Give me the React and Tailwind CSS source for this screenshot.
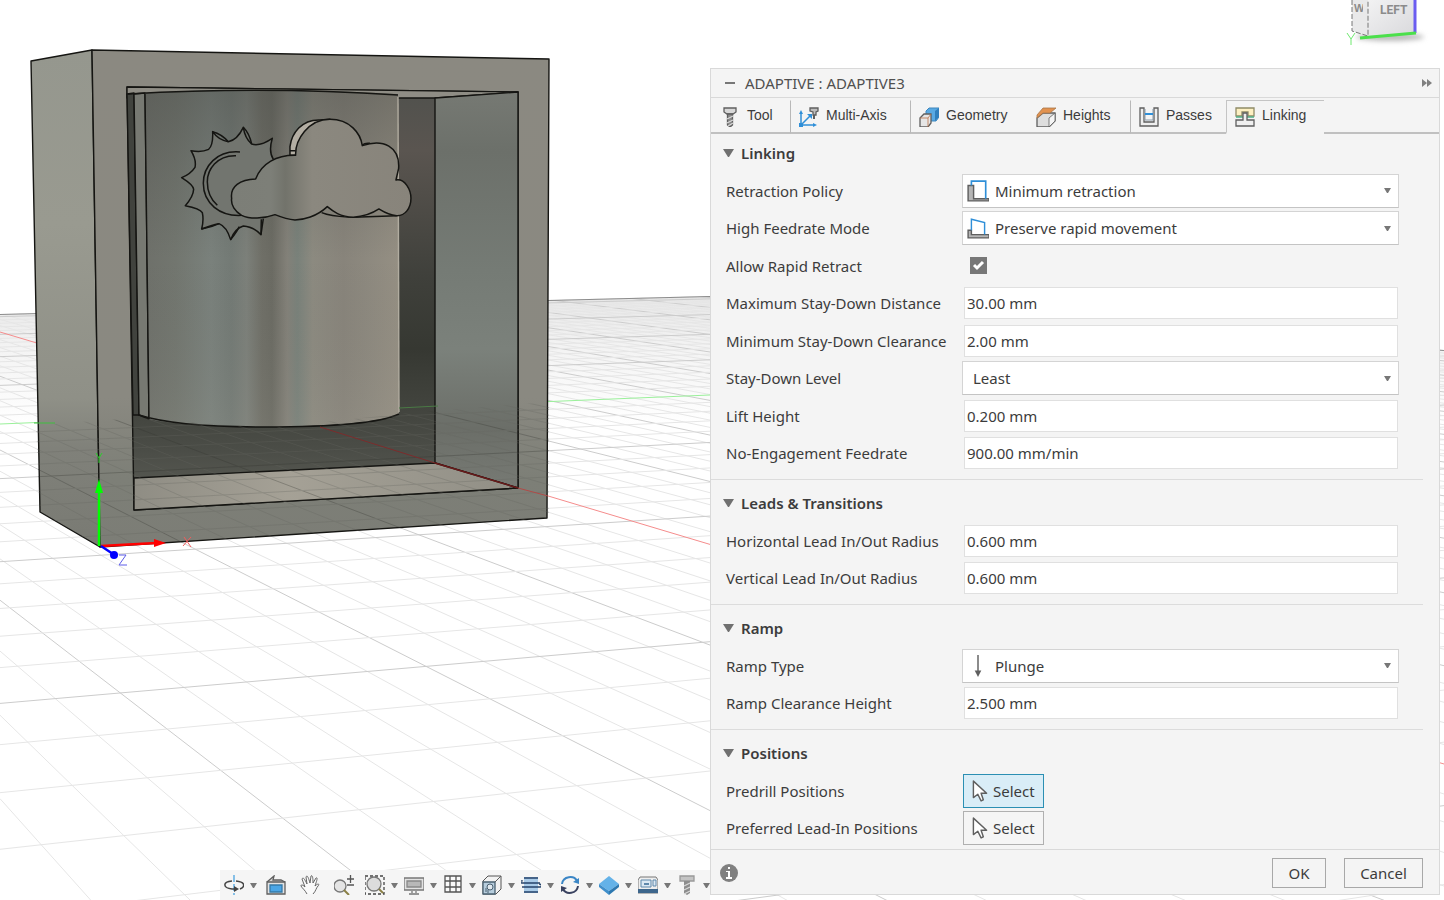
import { useId, useState } from 'react';

const HORIZON = 160;
const BASE = 547;

// grid lines, described by where they cross the base line
const gridLines = () => {
  const lines = [];
  for (let i = -16; i <= 190; i++) {
    const x = 711 + (i - 40) * 52;
    const slope = (BASE - HORIZON) / (x + 571);
    if (x > -540 && i !== 40) {
      lines.push({ key: 'b' + i, x1: 0, y1: HORIZON + slope * 571, x2: 1444, y2: HORIZON + slope * 2015, major: i % 5 === 0 });
    }
  }
  for (let i = -20; i <= 23; i++) {
    const x = -2911 + i * 314;
    const slope = (BASE - HORIZON) / (6250 - x);
    if (i !== 0) {
      lines.push({ key: 'a' + i, x1: 0, y1: HORIZON + slope * 6250, x2: 1444, y2: HORIZON + slope * 4806, major: i % 5 === 0 });
    }
  }
  return lines;
};

const GRID = gridLines();

const GridLines = ({ minor, major }) => (
  <g fill="none">
    {GRID.map((l) => (
      <line key={l.key} x1={l.x1} y1={l.y1} x2={l.x2} y2={l.y2} stroke={l.major ? major : minor} strokeWidth="1" />
    ))}
  </g>
);

const Scene = () => (
  <svg className="absolute inset-0 h-full w-full" viewBox="0 0 1444 900" preserveAspectRatio="xMinYMin slice" aria-hidden="true">
    <defs>
      <linearGradient id="haze" x1="0" y1="0" x2="0" y2="1">
        <stop offset="0" stopColor="#e6e6e6" />
        <stop offset="0.1" stopColor="#f4f4f4" />
        <stop offset="0.22" stopColor="#ffffff" />
      </linearGradient>
      <linearGradient id="side" x1="0" y1="0" x2="0" y2="1">
        <stop offset="0" stopColor="#95978e" />
        <stop offset="0.35" stopColor="#999a90" />
        <stop offset="0.7" stopColor="#8f9087" />
        <stop offset="0.8" stopColor="#80817a" />
        <stop offset="1" stopColor="#797a73" />
      </linearGradient>
      <linearGradient id="front" x1="0" y1="0" x2="0" y2="1">
        <stop offset="0" stopColor="#8b8981" />
        <stop offset="0.7" stopColor="#8a8981" />
        <stop offset="0.86" stopColor="#7d7f77" />
        <stop offset="1" stopColor="#7c7d76" />
      </linearGradient>
      <linearGradient id="cyl" x1="0" y1="0" x2="1" y2="0">
        <stop offset="0" stopColor="#6e706a" />
        <stop offset="0.12" stopColor="#72766f" />
        <stop offset="0.26" stopColor="#7a817c" />
        <stop offset="0.34" stopColor="#737a75" />
        <stop offset="0.4" stopColor="#7c807a" />
        <stop offset="0.46" stopColor="#6f6f67" />
        <stop offset="0.5" stopColor="#6b6b63" />
        <stop offset="0.56" stopColor="#838179" />
        <stop offset="0.6" stopColor="#79817a" />
        <stop offset="0.66" stopColor="#8c8a80" />
        <stop offset="0.78" stopColor="#88847b" />
        <stop offset="0.88" stopColor="#8d897f" />
        <stop offset="1" stopColor="#958f83" />
      </linearGradient>
      <linearGradient id="shade" x1="0" y1="0" x2="0" y2="1">
        <stop offset="0" stopColor="#4a4c48" stopOpacity="0.45" />
        <stop offset="0.25" stopColor="#4a4c48" stopOpacity="0.2" />
        <stop offset="0.5" stopColor="#4a4c48" stopOpacity="0" />
        <stop offset="1" stopColor="#aaa89c" stopOpacity="0.12" />
      </linearGradient>
      <linearGradient id="back" x1="0" y1="0" x2="0" y2="1">
        <stop offset="0" stopColor="#50514d" />
        <stop offset="0.15" stopColor="#5a5550" />
        <stop offset="0.45" stopColor="#3f403b" />
        <stop offset="0.62" stopColor="#363832" />
        <stop offset="0.86" stopColor="#4b4d47" />
        <stop offset="1" stopColor="#5e5f58" />
      </linearGradient>
      <linearGradient id="wall" x1="0" y1="0" x2="0" y2="1">
        <stop offset="0" stopColor="#767973" />
        <stop offset="0.15" stopColor="#6c706a" />
        <stop offset="0.45" stopColor="#757b75" />
        <stop offset="0.65" stopColor="#7b817b" />
        <stop offset="0.85" stopColor="#6b6e68" />
        <stop offset="1" stopColor="#777a74" />
      </linearGradient>
      <linearGradient id="floor" x1="0" y1="0" x2="1" y2="0">
        <stop offset="0" stopColor="#8f8d84" />
        <stop offset="0.4" stopColor="#a5a196" />
        <stop offset="1" stopColor="#918f86" />
      </linearGradient>
      <linearGradient id="cloud" x1="0" y1="0" x2="1" y2="0">
        <stop offset="0" stopColor="#7c7e77" />
        <stop offset="0.22" stopColor="#7d7f78" />
        <stop offset="0.3" stopColor="#72736b" />
        <stop offset="0.45" stopColor="#8b887f" />
        <stop offset="1" stopColor="#88847b" />
      </linearGradient>
      <clipPath id="ground">
        <path d="M0 314 L710 296 L1444 350 V900 H0Z" />
      </clipPath>
      <clipPath id="submerged">
        <path d="M36 425 L139 418 L270 428 L399 414 L549 402 V519 L100 547 L40 512Z" />
      </clipPath>
    </defs>

    <rect width="1444" height="900" fill="#fff" />
    <g clipPath="url(#ground)">
      <rect y="290" width="1444" height="610" fill="url(#haze)" />
      <GridLines minor="#e6e6e6" major="#cccccc" />
      <path d="M0 424 L710 395" stroke="#9af09a" fill="none" />
      <path d="M0 332 L1444 764" stroke="#f58c8c" fill="none" />
      <path d="M0 314 L710 296 L1444 350" stroke="#8c8c8c" fill="none" strokeWidth="2" />
    </g>

    {/* box */}
    <g stroke="#151512" strokeWidth="1.4" strokeLinejoin="round">
      <path d="M31 61 L92 50 L100 547 L40 512Z" fill="url(#side)" />
      <path d="M92 50 L549 59 L547 518 L100 547Z" fill="url(#front)" />
      <path d="M127 87 L518 92 L518 488 L134 510Z" fill="url(#back)" />
      <path d="M127 87 L518 92 L435 98 H127Z" fill="#8f8d85" />
      <path d="M435 98 L518 92 L518 488 L435 463Z" fill="url(#wall)" />
      <path d="M134 478 L435 463 L518 488 L134 510Z" fill="url(#floor)" />
      <path d="M127 94 L134 93 L139 415 L133 415Z" fill="#41433e" />
      <path d="M134 94 L145 93 L149 419 L139 415Z" fill="#777972" />
      <path d="M145 93 Q265 86 398 94 L399 414 C380 422 330 427 265 427 C220 427 170 424 149 419Z" fill="url(#cyl)" stroke="none" />
      <path d="M145 93 Q265 86 398 94 L399 414 C380 422 330 427 265 427 C220 427 170 424 149 419Z" fill="url(#shade)" stroke="none" />
      <path d="M128 94 Q265 86 398 95 M139 415 C170 425 220 427 265 427 C330 427 380 423 399 414 M145 93 L149 419" fill="none" />
      <path d="M398 97 L399 412" stroke="#b1aca0" fill="none" />
    </g>

    {/* sun and cloud relief */}
    <g transform="translate(0 30) scale(0.3333)" stroke="#151512" strokeWidth="4.5" strokeLinejoin="round" fill="none">
      <path fill="#72756f" d="M820 388 Q805 365 817 325 Q780 350 755 342 Q735 325 730 292 Q712 330 685 335 Q655 330 638 305 Q640 345 626 358 Q605 368 573 362 Q590 390 585 412 Q572 432 545 443 Q580 465 581 478 Q580 500 556 527 Q600 535 607 548 Q612 570 605 597 Q635 585 657 581 Q680 590 692 629 Q705 595 730 588 Q760 590 783 614 L790 566" />
      <path d="M638 305 Q665 312 685 335 M730 292 Q748 310 755 342 M605 597 Q635 592 657 581 M692 629 Q715 600 717 590 M783 614 L784 568 M720 366 C650 360 610 410 610 460 C610 520 660 560 725 556 M708 377 C650 375 622 420 622 455 C622 490 640 515 652 526" />
      <path fill="#b3aea3" d="M870 376 V350 C875 310 905 268 960 270 L990 268 L887 376Z" />
      <path d="M870 362 H887 M965 548 C1000 562 1040 560 1060 562 L1190 557 M1087 345 Q1095 338 1110 340" />
      <path fill="url(#cloud)" d="M695 505 C690 470 720 448 767 447 C785 400 830 375 887 376 C885 330 925 268 990 268 C1050 268 1082 310 1087 347 C1150 325 1200 350 1196 415 L1188 450 C1215 445 1233 480 1233 505 C1233 535 1215 558 1190 557 C1165 555 1150 545 1137 537 C1110 555 1090 560 1060 562 C1020 560 1000 545 982 530 C950 560 910 570 885 570 C860 568 840 560 825 554 C790 567 750 568 725 556 C705 545 692 525 695 505Z" />
    </g>

    <g clipPath="url(#submerged)" opacity="0.3">
      <GridLines minor="#666761" major="#33342f" />
    </g>
    <path d="M320 427 L435 463" stroke="#7c2c2c" fill="none" />
    <path d="M435 463 L518 488" stroke="#6b1a1a" fill="none" strokeWidth="1.5" />
    <path d="M518 488 L548 496" stroke="#b04b48" fill="none" />
    <path d="M34 423 L55 423" stroke="#3fbf3f" fill="none" />
    <path d="M399 408 L438 406" stroke="#4a7a45" fill="none" />

    {/* origin axes */}
    <path d="M99 546 V490" stroke="#0f0" strokeWidth="2.5" />
    <path d="M99 479 L103 493 H95Z" fill="#0f0" />
    <path d="M96 453 L99 458 L102 453 M99 458 V463" stroke="#2bd12b" fill="none" />
    <path d="M101 546 L156 543" stroke="red" strokeWidth="2.5" />
    <path d="M166 543 L154 539 V547Z" fill="red" />
    <path d="M101 546 L113 554" stroke="#00f" strokeWidth="2.5" />
    <circle cx="114" cy="555" r="4" fill="#00f" />
    <path d="M119 555 H126 L119 565 H127" stroke="#5c5ce8" fill="none" />
    <path d="M184 537 L191 547 M191 537 L183 546" stroke="#f25c5c" fill="none" />
  </svg>
);

const ViewCube = () => (
  <svg className="absolute top-0 right-0" width="104" height="56" viewBox="1340 0 104 56" aria-hidden="true">
    <defs>
      <filter id="soft" x="-20%" y="-100%" width="140%" height="300%">
        <feGaussianBlur stdDeviation="2.5" />
      </filter>
      <linearGradient id="cube" x1="0" y1="0" x2="1" y2="1">
        <stop offset="0" stopColor="#f2f2f3" />
        <stop offset="1" stopColor="#d9d9dc" />
      </linearGradient>
    </defs>
    <ellipse cx="1390" cy="37" rx="34" ry="4" fill="#bbb" filter="url(#soft)" />
    <path d="M1352 0 H1368 V36 L1352 31Z" fill="#e9e9ea" />
    <path d="M1368 0 H1415 V33 L1368 36Z" fill="url(#cube)" />
    <path d="M1352 0 V31 L1368 36 V0" fill="none" stroke="#777" strokeDasharray="5 2" />
    <path d="M1415 0 V33" stroke="#6a5cf0" strokeWidth="3" />
    <path d="M1360 38 L1416 33" stroke="#4be04b" strokeWidth="3" />
    <path d="M1347 33 L1351 39 L1355 33 M1351 39 V45" fill="none" stroke="#6fe86f" />
    <text x="1354" y="12" fontSize="11" fontWeight="700" fill="#8b8b8b" fontFamily="Liberation Sans, sans-serif">W</text>
    <path d="M1363 0 H1367 V14 H1363Z" fill="#e9e9ea" />
    <text x="1380" y="14" fontSize="12" fontWeight="700" fill="#8b8b8b" fontFamily="Roboto, sans-serif">LEFT</text>
  </svg>
);

const Icon = ({ size = 20, children }) => (
  <svg className="shrink-0" width={size} height={size} viewBox="0 0 20 20" fill="none" stroke="#5f5f5f" strokeWidth="1.3" aria-hidden="true">
    {children}
  </svg>
);

const ToolIcon = () => (
  <Icon>
    <path d="M4 1 H16 V5 L13 7 H7 L4 5Z" fill="#d8d8d8" />
    <path d="M7.500 7 V18 L10 20 L12.500 18 V7Z" fill="#8a8a8a" />
    <path d="M7 12 L13 9 M7 16 L13 13 M8 19 L13 16" stroke="#d8d8d8" />
  </Icon>
);

const MultiAxisIcon = () => (
  <Icon>
    <path d="M2 18 V5 M2 18 H15 M2 18 L12 8" stroke="#2f8fd8" strokeWidth="1.5" />
    <path d="M0 7 L2 3 L4 7Z M14 16 L18 18 L14 20Z M8 7 H13 V12Z M0 16 H4 V20 H0Z" fill="#2f8fd8" stroke="none" />
    <path d="M11 1 H19 V4 L17 5 V8 H14 V5 L11 4Z" fill="#bdbdbd" />
    <path d="M15 8 V12" strokeWidth="2" />
  </Icon>
);

const GeometryIcon = () => (
  <Icon>
    <path d="M7 4 L10 1 H20 V10 L17 14 H7Z" fill="#58a9e3" stroke="#3f87bd" strokeWidth="1" />
    <path d="M16 4 L20 1 V10 L16 14Z" fill="#2f7fbd" stroke="none" />
    <path d="M1 11 L5 7 H12 V16 L9 20 H1Z" fill="#e6e6e6" />
    <path d="M1 11 H9 V20 M9 11 L12 7" stroke="#b9714a" strokeWidth="0.8" />
  </Icon>
);

const HeightsIcon = () => (
  <Icon>
    <path d="M1 11 L7 6 H19 V14 L13 20 H1Z" fill="#dedede" />
    <path d="M13 20 V11 L19 6 V14Z" fill="#f5f5f5" strokeWidth="0.8" />
    <path d="M1 8 L7 1 H20 L14 6 H7 L1 11Z" fill="#e2924f" stroke="#a8764a" strokeWidth="0.8" />
  </Icon>
);

const PassesIcon = () => (
  <Icon>
    <path d="M1 1 H5 V15 H15 V1 H19 V19 H1Z" fill="#efefef" />
    <path d="M6 2 V13 H14 V2" stroke="#8a9aa8" strokeWidth="1" />
    <path d="M6 7 H14" stroke="#2f8fd8" strokeWidth="2" />
  </Icon>
);

const LinkingIcon = () => (
  <Icon>
    <path d="M1 1 H19 V9 H13 V5 H7 V9 H1Z" fill="#fdf0c2" stroke="#8f8a66" />
    <path d="M1 10 H8 M12 10 H19" stroke="#4fae86" />
    <path d="M1 19 V13 H8 V6 H12 V13 H19 V19Z" fill="#efefef" />
  </Icon>
);

const RetractIcon = () => (
  <Icon size={22}>
    <path d="M1 5 H6 V17 H20 V19 H1Z" fill="#b5b5b5" />
    <path d="M4 5 V1 H17 V17" stroke="#2f8fd8" strokeWidth="1.500" />
  </Icon>
);

const RapidIcon = () => (
  <Icon size={22}>
    <path d="M1 12 H4 V16 H20 V19 H1Z" fill="#b5b5b5" />
    <path d="M4 12 V2 L16 5 V16" stroke="#2f8fd8" />
  </Icon>
);

const PlungeIcon = () => (
  <Icon size={22}>
    <path d="M10 0 V16" />
    <path d="M7 14 L10 20 L13 14Z" fill="#5f5f5f" stroke="none" />
  </Icon>
);

const CursorIcon = () => (
  <Icon size={22}>
    <path d="M4 1 V16 L8 13 L11 19 L13 18 L11 12 H16Z" fill="#fff" strokeLinejoin="round" />
  </Icon>
);

const Caret = () => (
  <svg width="7" height="5" viewBox="0 0 7 5" className="pointer-events-none shrink-0" aria-hidden="true">
    <path d="M0 0 H7 L4 5 H3Z" fill="#777" />
  </svg>
);

const tabs = [
  { name: 'Tool', icon: ToolIcon, box: 'w-20 border-r border-r-[#b8b8b8]' },
  { name: 'Multi-Axis', icon: MultiAxisIcon, box: 'w-[120px] border-r border-r-[#b8b8b8]' },
  { name: 'Geometry', icon: GeometryIcon, box: 'w-[117px]' },
  { name: 'Heights', icon: HeightsIcon, box: 'w-[103px] border-r border-r-[#b8b8b8]' },
  { name: 'Passes', icon: PassesIcon, box: 'w-[95px]' },
  { name: 'Linking', icon: LinkingIcon, box: 'w-[98px]' },
];

const Row = ({ label, id, children }) => (
  <div className="grid min-w-0 grid-cols-[236px_minmax(0,1fr)] items-center">
    <label htmlFor={id} className="whitespace-nowrap">{label}</label>
    {children}
  </div>
);

const SelectRow = ({ label, value, icon }) => {
  const id = useId();
  return (
    <Row label={label} id={id}>
      <div className="relative flex items-center">
        <select
          id={id}
          defaultValue={value}
          className={`h-[34px] w-full appearance-none border border-[#d4d4d4] border-b-[#c4c4c4] bg-white pr-6 ${icon ? 'pl-8' : 'pl-[10px]'}`}
        >
          <option>{value}</option>
        </select>
        <span className="pointer-events-none absolute left-[5px]">{icon}</span>
        <span className="pointer-events-none absolute right-2"><Caret /></span>
      </div>
    </Row>
  );
};

const InputRow = ({ label, value }) => {
  const id = useId();
  return (
    <Row label={label} id={id}>
      <div className="flex pr-px pl-0.5">
        <input id={id} type="text" defaultValue={value} className="h-8 w-full border border-[#e0e0e0] bg-white px-0.5" />
      </div>
    </Row>
  );
};

const CheckRow = ({ label }) => {
  const id = useId();
  return (
    <Row label={label} id={id}>
      <div className="relative flex items-center pl-2">
        <input id={id} type="checkbox" defaultChecked className="peer size-[17px] appearance-none border border-[#777] bg-white checked:bg-[#777]" />
        <svg className="pointer-events-none absolute left-2 hidden peer-checked:block" width="17" height="17" viewBox="0 0 17 17" fill="none" stroke="#fff" strokeWidth="3" aria-hidden="true">
          <path d="M4 8 L7 11 L13 5" />
        </svg>
      </div>
    </Row>
  );
};

const PickRow = ({ label, active }) => {
  const id = useId();
  return (
    <Row label={label} id={id}>
      <button
        id={id}
        type="button"
        className={`ml-px flex h-[34px] w-[81px] items-center gap-0.5 border pl-[5px] ${active ? 'border-[#2b8fb3] bg-[#d9edf7]' : 'border-[#b0b0b0] bg-[#f5f5f5]'}`}
      >
        <CursorIcon />
        <span>Select</span>
      </button>
    </Row>
  );
};

const Section = ({ title, rows, last, children }) => {
  const [open, setOpen] = useState(true);
  return (
    <section className={`mr-4 pt-1 first:pt-0 ${last ? 'pb-0.5' : 'border-b border-[#dcdcdc] pb-[7px]'}`}>
      <h2>
        <button type="button" aria-expanded={open} onClick={() => setOpen(!open)} className="flex h-[38px] items-center gap-[7px] pl-3 font-semibold">
          <svg width="11" height="8" viewBox="0 0 11 8" aria-hidden="true">
            <path d="M0 0 H11 L6 8 H5Z" fill="#707070" />
          </svg>
          {title}
        </button>
      </h2>
      {open && <div className={`grid auto-rows-fr pr-6 pl-[15px] ${rows}`}>{children}</div>}
    </section>
  );
};

const AdaptivePanel = () => {
  const [tab, setTab] = useState('Linking');

  return (
    <section className="relative mt-[68px] mb-[5px] flex flex-col border border-[#d9d9d9] bg-[#f4f4f4] text-[15px] leading-5 text-[#3c3c3c]">
      <header className="flex h-[29px] items-center border-b border-[#d9d9d9] pr-[7px] pl-[14px]">
        <button type="button" aria-label="Collapse" className="flex h-5 w-5 items-center">
          <span className="h-0.5 w-[10px] bg-[#777]" />
        </button>
        <h1 className="text-[#505050]">ADAPTIVE : ADAPTIVE3</h1>
        <button type="button" aria-label="Dock" className="ml-auto">
          <svg width="10" height="8" viewBox="0 0 10 8" aria-hidden="true">
            <path d="M0 0 L5 4 L0 8Z M5 0 L10 4 L5 8Z" fill="#808080" />
          </svg>
        </button>
      </header>

      <div role="tablist" className="flex h-9 pt-0.5 font-['Liberation_Sans',sans-serif] text-[14px]">
        {tabs.map(({ name, icon: TabIcon, box }) => (
          <button
            key={name}
            type="button"
            role="tab"
            aria-selected={tab === name}
            onClick={() => setTab(name)}
            className={`flex shrink-0 items-center gap-[7px] border-t border-b-2 ${box} ${name === 'Tool' ? 'pl-[9px]' : 'pl-2'} ${
              tab === name ? 'border-l border-l-[#c4c4c4] border-t-[#c4c4c4] border-b-transparent' : 'border-t-transparent border-b-[#c0c0c0]'
            }`}
          >
            <TabIcon />
            <span className="pb-1">{name}</span>
          </button>
        ))}
        <div className="grow border-b-2 border-[#c0c0c0]" />
      </div>

      <form className="flex flex-col" onSubmit={(e) => e.preventDefault()}>
        <div>
          <Section title="Linking" rows="h-[300px]">
            <SelectRow label="Retraction Policy" value="Minimum retraction" icon={<RetractIcon />} />
            <SelectRow label="High Feedrate Mode" value="Preserve rapid movement" icon={<RapidIcon />} />
            <CheckRow label="Allow Rapid Retract" />
            <InputRow label="Maximum Stay-Down Distance" value="30.00 mm" />
            <InputRow label="Minimum Stay-Down Clearance" value="2.00 mm" />
            <SelectRow label="Stay-Down Level" value="Least" />
            <InputRow label="Lift Height" value="0.200 mm" />
            <InputRow label="No-Engagement Feedrate" value="900.00 mm/min" />
          </Section>
          <Section title="Leads &amp; Transitions" rows="h-[75px]">
            <InputRow label="Horizontal Lead In/Out Radius" value="0.600 mm" />
            <InputRow label="Vertical Lead In/Out Radius" value="0.600 mm" />
          </Section>
          <Section title="Ramp" rows="h-[75px]">
            <SelectRow label="Ramp Type" value="Plunge" icon={<PlungeIcon />} />
            <InputRow label="Ramp Clearance Height" value="2.500 mm" />
          </Section>
          <Section title="Positions" rows="h-[75px]" last>
            <PickRow label="Predrill Positions" active />
            <PickRow label="Preferred Lead-In Positions" />
          </Section>
        </div>

        <footer className="flex items-center gap-[18px] border-t border-[#d9d9d9] pt-2 pr-4 pb-[6px] pl-[9px]">
          <button type="button" aria-label="Info" className="mr-auto">
            <svg width="18" height="18" viewBox="0 0 18 18" aria-hidden="true">
              <circle cx="9" cy="9" r="9" fill="#808080" />
              <path d="M6 7 H10 V13 H12 V15 H6 V13 H8 V8 H6Z M8 3 H10 V5 H8Z" fill="#fff" />
            </svg>
          </button>
          <button type="submit" className="h-[30px] w-[54px] border border-[#a8a8a8]">OK</button>
          <button type="button" className="h-[30px] w-[79px] border border-[#a8a8a8]">Cancel</button>
        </footer>
      </form>
    </section>
  );
};

const navTools = [
  {
    name: 'Orbit',
    menu: true,
    art: (
      <>
        <path d="M10 0 V20" stroke="#4aa3df" strokeDasharray="7 2" />
        <path d="M8 6 C-2 7 -1 13 8 14 H13 M12 6 C22 7 21 12 16 14" stroke="#444" strokeWidth="1.5" />
        <path d="M10 11 L15 14 L10 17Z" fill="#444" stroke="none" />
      </>
    ),
  },
  {
    name: 'Look At',
    art: (
      <>
        <path d="M1 7 L8 1 L7 5 H15 L19 7" fill="#d5d5d5" />
        <path d="M1 7 H19 V19 H1Z" fill="#e2e2e2" />
        <path d="M4 10 H16 V17 H4Z" fill="#4ba6e6" stroke="#3579a8" />
      </>
    ),
  },
  {
    name: 'Pan',
    art: (
      <path
        d="M7 19 C5 15 2 13 1 11 C1 9 3 10 5 12 L2 4 C3 2 4 3 7 9 L6 2 C7 0 8 1 10 8 L11 1 C12 0 13 1 13 8 L16 3 C18 2 17 5 15 11 C18 8 20 9 18 11 C16 13 16 16 13 19"
        fill="#fafafa"
        stroke="#666"
        strokeWidth="1"
      />
    ),
  },
  {
    name: 'Zoom',
    art: (
      <>
        <circle cx="6" cy="11" r="6" fill="#e4e4e4" stroke="#777" />
        <path d="M10 15 L15 20" stroke="#8b8046" strokeWidth="2" />
        <path d="M13 4 H20 M16.500 0 V8 M13 10 H20" stroke="#555" />
      </>
    ),
  },
  {
    name: 'Zoom Window',
    menu: true,
    art: (
      <>
        <path d="M0 1 H19 V19 H0Z" stroke="#444" strokeDasharray="3 2" />
        <circle cx="9" cy="9" r="7" fill="#dcdcdc" stroke="#777" />
        <path d="M14 14 L18 18" stroke="#8b8046" strokeWidth="2" />
      </>
    ),
  },
  {
    name: 'Display Settings',
    menu: true,
    art: (
      <>
        <path d="M0 3 H20 V15 H0Z" fill="#e2e2e2" stroke="#777" />
        <path d="M3 6 H17 V12 H3Z" fill="#b8b8b8" stroke="#888" />
        <path d="M8 16 V18 M12 16 V18 M5 19 H15" stroke="#777" />
      </>
    ),
  },
  {
    name: 'Grid and Snaps',
    menu: true,
    art: <path d="M2 1 H18 V17 H2Z M7 1 V17 M13 1 V17 M2 6 H18 M2 12 H18" fill="#fafafa" stroke="#555" />,
  },
  {
    name: 'Viewports',
    menu: true,
    art: (
      <>
        <path d="M1 6 L6 1 H19 V14 L14 19 H1Z" fill="#f2f2f2" stroke="#555" strokeWidth="1" />
        <path d="M1 7 H13 V19 H1Z" fill="#b7cddd" stroke="#4a6070" />
        <path d="M13 7 L19 1" strokeWidth="1" />
        <circle cx="8" cy="12" r="3" fill="#e1e9ef" stroke="#4a6070" strokeWidth="1" />
        <path d="M4 13 V17 M6 15 V18" stroke="#4a6070" strokeWidth="1" />
      </>
    ),
  },
  {
    name: 'Object Visibility',
    menu: true,
    art: (
      <>
        <path d="M3 2 H17 V18 H3Z" fill="#a9cbe8" stroke="none" />
        <path d="M3 3 H17 M1 8 H19 M1 12 H19 M3 17 H17" stroke="#24436a" strokeWidth="1.400" />
        <path d="M1 8 C-1 8 -1 5 2 6 M19 12 C21 12 21 9 18 9" stroke="#24436a" />
      </>
    ),
  },
  {
    name: 'Regenerate',
    menu: true,
    art: (
      <>
        <path d="M2 9 C3 1 14 0 17 6" stroke="#3b86c6" strokeWidth="2" />
        <path d="M18 11 C17 19 6 20 3 14" stroke="#3a4260" strokeWidth="2" />
        <path d="M19 3 V9 L13 7Z" fill="#3b86c6" stroke="none" />
        <path d="M1 17 V11 L7 13Z" fill="#3a4260" stroke="none" />
      </>
    ),
  },
  {
    name: 'Stock',
    menu: true,
    art: (
      <>
        <path d="M10 1 L20 9 L10 16 L0 9Z" fill="#64b2e8" stroke="none" />
        <path d="M0 9 L10 16 V20 L0 12Z" fill="#3f8fcb" stroke="none" />
        <path d="M20 9 L10 16 V20 L20 12Z" fill="#2d78b0" stroke="none" />
      </>
    ),
  },
  {
    name: 'Machine',
    menu: true,
    art: (
      <>
        <path d="M2 2 H18 L20 5 V18 H0 V5Z" fill="#eeeeee" stroke="#777" strokeWidth="1" />
        <path d="M3 5 H13 V12 H3Z M15 5 H18 V11 H15Z" fill="#dbe8f3" stroke="#5f88ab" strokeWidth="1" />
        <path d="M0 14 H20 V18 H0Z" fill="#3d668c" stroke="none" />
        <path d="M6 8 H11 V10 H6Z" fill="#5f88ab" stroke="none" />
      </>
    ),
  },
  {
    name: 'Tool Display',
    menu: true,
    art: (
      <>
        <path d="M3 1 H17 V6 H3Z" fill="#c4c4c4" stroke="#999" />
        <path d="M7 6 H13 V18 L10 20 L7 18Z" fill="#8d8d8d" stroke="none" />
        <path d="M7 11 L13 8 M7 15 L13 12 M7 19 L13 16" stroke="#d8d8d8" />
      </>
    ),
  },
];

const NavBar = () => (
  <nav aria-label="View" className="relative flex h-[30px] items-center gap-1 bg-[#f5f5f5] pl-0.5">
    {navTools.map(({ name, menu, art }) => (
      <button key={name} type="button" aria-label={name} className={`flex shrink-0 items-center ${menu ? 'w-[35px] justify-between pl-0.5' : 'w-[30px] justify-center'}`}>
        <Icon>{art}</Icon>
        {menu && <Caret />}
      </button>
    ))}
  </nav>
);

export default function App() {
  return (
    <main className="relative grid min-h-screen grid-cols-[minmax(0,71fr)_minmax(0,73fr)] overflow-hidden bg-white pr-1 font-['Noto_Sans',sans-serif]">
      <Scene />
      <ViewCube />
      <div className="flex items-end justify-end">
        <NavBar />
      </div>
      <AdaptivePanel />
    </main>
  );
}
